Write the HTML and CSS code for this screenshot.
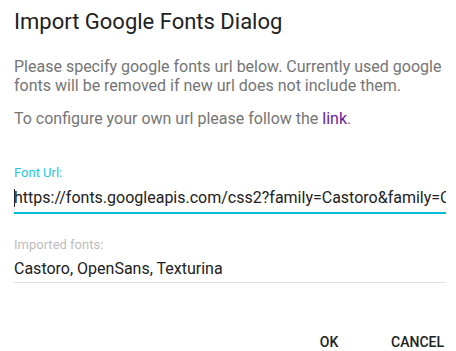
FILE: index.html
```html
<!DOCTYPE html>
<html>
<head>
<meta charset="utf-8">
<link rel="stylesheet" href="styles.css">
</head>
<body>
<div class="dialog">
  <h2 class="title">Import Google Fonts Dialog</h2>
  <div class="content">
    <p class="text">Please specify google fonts url below. Currently used google fonts will be removed if new url does not include them.</p>
    <p class="text">To configure your own url please follow the <a class="link" href="#">link</a>.</p>
    <div class="field focused">
      <div class="label">Font Url:</div>
      <div class="input"><span class="caret"></span>https://fonts.googleapis.com/css2?family=Castoro&amp;family=Open+Sans&amp;family=Texturina</div>
    </div>
    <div class="field">
      <div class="label">Imported fonts:</div>
      <div class="input">Castoro, OpenSans, Texturina</div>
    </div>
  </div>
  <div class="actions">
    <button class="btn">OK</button>
    <button class="btn">CANCEL</button>
  </div>
</div>
</body>
</html>
```
FILE: styles.css
```css
html, body {
  margin: 0;
  padding: 0;
  background: #fff;
}
body {
  font-family: Roboto, "Noto Sans", sans-serif;
  width: 456px;
  height: 351px;
  overflow: hidden;
}
.dialog {
  padding: 0 10px 0 14px;
  display: flex;
  flex-direction: column;
}
.title {
  margin: 8px 0 0 0;
  font-size: 22px;
  font-weight: 400;
  line-height: 28px;
  color: #212121;
}
.content {
  margin-top: 22px;
}
.text {
  margin: 0 0 14px 0;
  font-size: 16px;
  line-height: 18.75px;
  color: #757575;
}
.link {
  color: #6a1b9a;
  text-decoration: none;
}
.field {
  margin-top: 37px;
}
.field + .field {
  margin-top: 23px;
}
.label {
  font-size: 13px;
  line-height: 16px;
  color: #bdbdbd;
}
.focused .label {
  color: #26c6da;
}
.input {
  margin-top: 7px;
  font-size: 16px;
  line-height: 20px;
  padding-bottom: 4px;
  color: #212121;
  white-space: nowrap;
  overflow: hidden;
  border-bottom: 1px solid #e0e0e0;
}
.field + .field .input {
  margin-top: 6px;
  padding-bottom: 3px;
}
.focused .input {
  border-bottom: 2px solid #00bcd4;
  padding-bottom: 4px;
}
.caret {
  display: inline-block;
  width: 1px;
  height: 18px;
  background: #212121;
  vertical-align: -4px;
  margin-right: -1px;
}
.actions {
  display: flex;
  justify-content: flex-end;
  gap: 22px;
  margin-top: 45px;
  margin-right: -6px;
}
.btn {
  background: none;
  border: none;
  font-family: Roboto, sans-serif;
  font-size: 14px;
  font-weight: 500;
  color: #212121;
  padding: 6px 8px;
  min-width: 64px;
  text-align: center;
}
```
